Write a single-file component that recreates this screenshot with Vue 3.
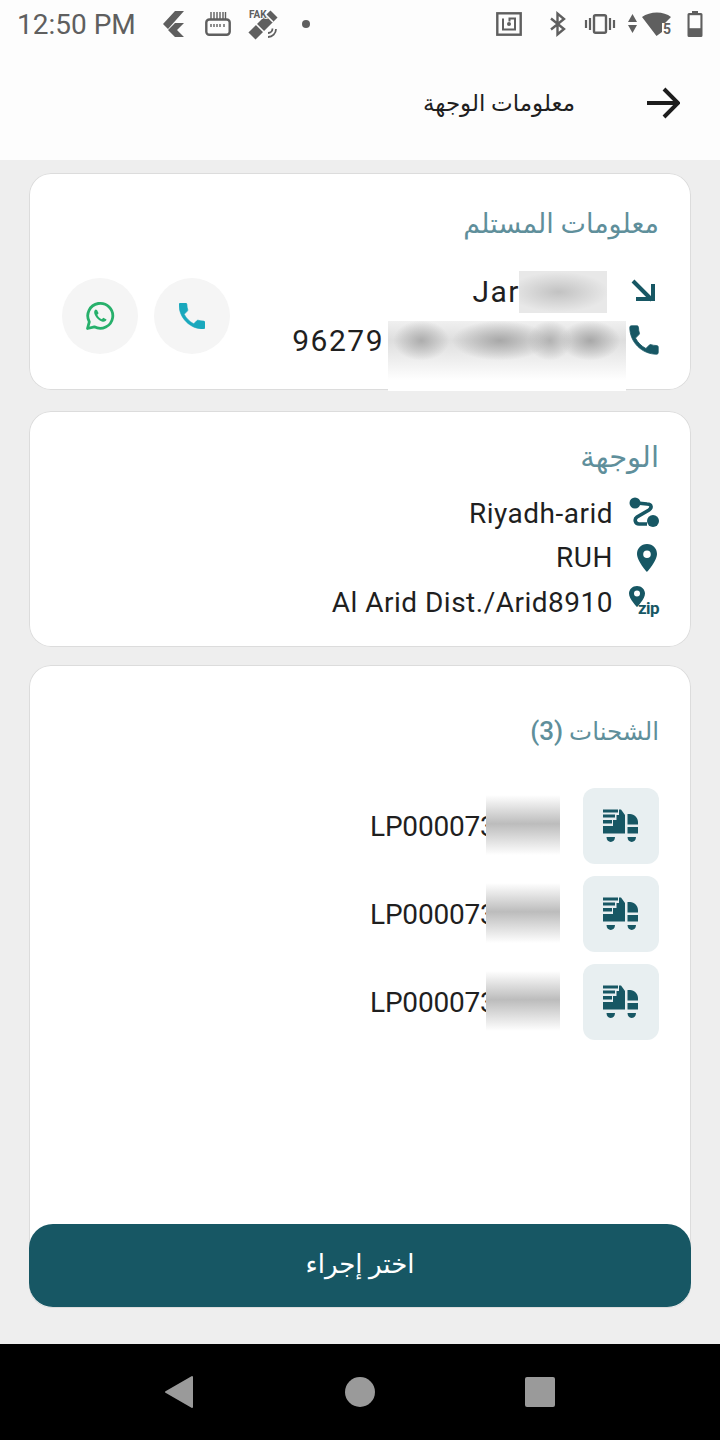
<template>
  <div class="page">
    <header class="top">
      <div class="status" dir="ltr">
        <span class="time">12:50 PM</span>
        <div class="status-left">
          <svg width="22" height="28" viewBox="0 0 22 28"><path d="M0 14L12 1H21L5 19ZM12 13H21L14 20L21 27H12L5 20Z" fill="#5f5f5f"/></svg>
          <svg class="sim" width="26" height="24" viewBox="0 0 26 24"><rect x="1.300" y="7.500" width="23.400" height="15.200" rx="3" fill="none" stroke="#5f5f5f" stroke-width="2.400"/><path d="M6 0v7M9 0v7M12 0v7M15 0v7M18 0v7M20.500 0v7M6 12v3M9 12v3M12 12v3M15 12v3M19 12v3" stroke="#5f5f5f" stroke-width="1.400"/></svg>
          <svg class="sat" width="30" height="30" viewBox="0 0 30 30"><path d="M26 5L4 27" stroke="#5f5f5f" stroke-width="10"/><path d="M7 14L16 23M17 5L25 13" stroke="#fdfdfd" stroke-width="1.600"/><path d="M20 24c2.500 0 4.500-2 4.500-4.500M20 28c4.500 0 8-3.500 8-8" fill="none" stroke="#5f5f5f" stroke-width="1.800"/><text x="1" y="8.500" class="fake">FAK</text></svg>
          <i class="dot"></i>
        </div>
        <div class="status-right">
          <svg width="26" height="24" viewBox="0 0 26 24"><rect x="1.300" y="1.300" width="23.400" height="21.400" fill="none" stroke="#5f5f5f" stroke-width="2.400"/><path d="M7 6.500v11h12v-11h-5.500v3" fill="none" stroke="#5f5f5f" stroke-width="2"/><circle cx="13" cy="12" r="2" fill="#5f5f5f"/></svg>
          <svg class="bt" width="19" height="24" viewBox="0 0 19 24"><path d="M3 6.500L16 17L9.500 22.500V1.500L16 7L3 17.500" fill="none" stroke="#5f5f5f" stroke-width="2.400"/></svg>
          <svg class="vib" width="30" height="20" viewBox="0 0 30 20"><rect x="9" y="1.200" width="12" height="17.600" rx="1.500" fill="none" stroke="#5f5f5f" stroke-width="2.400"/><path d="M5 4v12M1 6v8M25 4v12M29 6v8" stroke="#5f5f5f" stroke-width="2.200"/></svg>
          <svg class="wifi" width="44" height="24" viewBox="0 0 44 24"><path d="M4.500 2L9 10H0ZM0 13H9L4.500 21Z" fill="#5f5f5f"/><path d="M14 5C22 -1 36 -1 43 5L37 11H34V20L28.500 24Z" fill="#5f5f5f"/><text x="35" y="22" class="five">5</text></svg>
          <svg class="batt" width="16" height="26" viewBox="0 0 16 26"><path d="M5 0h6v2h3a1.500 1.500 0 0 1 1.500 1.500v21a1.500 1.500 0 0 1-1.500 1.500H2a1.500 1.500 0 0 1-1.500-1.500v-21A1.500 1.500 0 0 1 2 2h3z" fill="#5f5f5f"/><rect x="2.600" y="4.200" width="10.800" height="13" fill="#fdfdfd"/></svg>
        </div>
      </div>
      <div class="appbar">
        <svg width="34" height="32" viewBox="0 0 34 32"><path d="M1 16H32M18 2L32 16L18 30" fill="none" stroke="#1d1d1d" stroke-width="4"/></svg>
        <h1>معلومات الوجهة</h1>
      </div>
    </header>

    <main class="content">
      <section class="card receiver">
        <div class="info">
          <h2>معلومات المستلم</h2>
          <div class="line">
            <svg class="ico" width="30" height="30" viewBox="0 0 30 30"><path d="M4 5L23 24M24 8V23H7" fill="none" stroke="#175764" stroke-width="4"/></svg>
            <span class="masked" dir="ltr">Jar<i class="redact name"></i><b class="spacer name-w"></b></span>
          </div>
          <div class="line">
            <svg class="ico" width="30" height="30" viewBox="2.500 2.500 19 19"><path :d="phonePath" fill="#175764" stroke="#175764" stroke-width=".5" stroke-linejoin="round"/></svg>
            <span class="masked" dir="ltr">96279<i class="redact phone"></i><b class="spacer phone-w"></b></span>
          </div>
        </div>
        <div class="actions">
          <button class="round">
            <svg width="26" height="26" viewBox="3 3 18 18"><path :d="phonePath" fill="#19a8bd" stroke="#19a8bd" stroke-width=".4" stroke-linejoin="round"/></svg>
          </button>
          <button class="round">
            <svg width="30" height="30" viewBox="0 0 30 30"><path d="M2.500 27.500L4.300 20.800A12.500 12.500 0 1 1 9.300 25.800Z" fill="none" stroke="#27b06b" stroke-width="2.800" stroke-linejoin="round"/><path d="M10.500 8.500c-1.500 1-1.800 3-.6 5.500 1.500 3 4 5.500 7 6.500 2.500.7 4.200-.3 4.600-2l-3.200-1.800-1.500 1.500c-2-.8-3.600-2.500-4.500-4.500l1.300-1.400-1.600-3.300z" fill="#27b06b"/></svg>
          </button>
        </div>
      </section>

      <section class="card destination">
        <h2>الوجهة</h2>
        <div class="line">
          <svg class="ico" width="30" height="32" viewBox="0 0 30 32"><circle cx="6" cy="6" r="5.500" fill="#175764"/><circle cx="24" cy="24" r="6" fill="#175764"/><path d="M8 6L18 7C23 7 23 11 20 13L8 20C5 22 6 27 10 27L18 27" fill="none" stroke="#175764" stroke-width="3.600"/></svg>
          <span dir="ltr">Riyadh-arid</span>
        </div>
        <div class="line">
          <svg class="ico" width="30" height="30" viewBox="0 0 30 30"><path fill-rule="evenodd" d="M18 1C12 1 8 5.500 8 11c0 7 10 18 10 18s10-11 10-18C28 5.500 24 1 18 1zm0 6.500a3.800 3.800 0 1 1 0 7.600 3.800 3.800 0 0 1 0-7.600z" fill="#175764"/></svg>
          <span dir="ltr">RUH</span>
        </div>
        <div class="line">
          <svg class="ico" width="30" height="34" viewBox="0 0 30 34"><path fill-rule="evenodd" d="M8 1C3.500 1 0 4.500 0 8.500 0 14 8 22 8 22S16 14 16 8.500C16 4.500 12.500 1 8 1zm0 4.500a3 3 0 1 1 0 6 3 3 0 0 1 0-6z" fill="#175764"/><text x="9" y="29" class="zip">zip</text></svg>
          <span dir="ltr">Al Arid Dist./Arid8910</span>
        </div>
      </section>

      <section class="card shipments">
        <h2 class="ship-title">الشحنات <b>(3)</b></h2>
        <ul class="ship-list">
          <li v-for="n in 3" :key="n" class="ship">
            <div class="tile">
              <svg width="76" height="76" viewBox="0 0 76 76">
                <path d="M20 21.500h15v3H20zM20 26.500h12v3H20zM20 32h9v3.500H20z" fill="#175764"/>
                <path d="M36 21.500h2l4 5.500v18.500H20V38h10v-6h3.500v-5H36z" fill="#175764"/>
                <path d="M44.500 26H47c4.500 0 8 4 8 8v2.500H44.500zM44.500 39H55v6.500H44.500z" fill="#175764"/>
                <path d="M23.500 49H32c0 6.500-8.500 6.500-8.500 0zM44.500 49H53c0 6.500-8.500 6.500-8.500 0z" fill="#175764"/>
              </svg>
            </div>
            <span class="masked code" dir="ltr">LP000073<i class="redact code-blur"></i></span>
          </li>
        </ul>
        <button class="action">اختر إجراء</button>
      </section>
    </main>

    <nav class="nav">
      <svg class="back" width="30" height="34" viewBox="0 0 30 34"><path d="M28 2V32L2 17Z" fill="#9a9a9a" stroke="#9a9a9a" stroke-width="2" stroke-linejoin="round"/></svg>
      <i class="home"></i>
      <i class="recent"></i>
    </nav>
  </div>
</template>

<script setup>
const phonePath = 'M6.620 10.790c1.440 2.830 3.760 5.140 6.590 6.590l2.200-2.200c.27-.27.67-.36 1.020-.24 1.120.37 2.330.57 3.570.57.55 0 1 .45 1 1V20c0 .55-.45 1-1 1-9.390 0-17-7.610-17-17 0-.55.45-1 1-1h3.500c.55 0 1 .45 1 1 0 1.250.2 2.450.57 3.570.11.35.03.74-.25 1.020l-2.200 2.200z'
</script>

<style>
body {
  margin: 0;
}
</style>

<style scoped>
.page {
  width: 720px;
  height: 1440px;
  display: flex;
  flex-direction: column;
  background: #eeeeee;
  font-family: Roboto, "DejaVu Sans", sans-serif;
  color: #1f1f1f;
}

.top {
  height: 160px;
  background: #fdfdfd;
}

.status {
  height: 48px;
  display: flex;
  align-items: center;
  padding: 0 17px;
  color: #5f5f5f;
}

.status svg {
  overflow: visible;
}

.time {
  font-size: 28px;
}

.status-left {
  display: flex;
  align-items: center;
  margin-left: 27px;
}

.sim {
  margin-left: 20px;
}

.sat {
  margin-left: 17px;
}

.dot {
  width: 8px;
  height: 8px;
  margin-left: 24px;
  border-radius: 50%;
  background: #5f5f5f;
}

.status-right {
  display: flex;
  align-items: center;
  margin-left: auto;
}

.bt {
  margin-left: 26px;
}

.vib {
  margin-left: 18px;
}

.wifi {
  margin-left: 13px;
}

.batt {
  margin-left: 15px;
}

.fake {
  font: bold 10px Roboto, sans-serif;
  fill: #5f5f5f;
  stroke: #fdfdfd;
  stroke-width: 1.5px;
  paint-order: stroke;
}

.five {
  font: bold 14px Roboto, sans-serif;
  fill: #5f5f5f;
}

.zip {
  font: bold 17px Roboto, sans-serif;
  letter-spacing: -0.6px;
  fill: #175764;
}

.appbar {
  height: 110px;
  display: flex;
  flex-direction: row-reverse;
  align-items: center;
  gap: 71px;
  padding-right: 40px;
}

.appbar h1 {
  margin: 0;
  font-size: 23px;
  font-weight: 400;
  direction: rtl;
}

.content {
  flex: 1;
  display: flex;
  flex-direction: column;
  gap: 21px;
  padding: 13px 29px 36px;
  min-height: 0;
}

.card {
  box-sizing: border-box;
  background: #ffffff;
  border-radius: 22px;
  box-shadow: inset 0 0 0 1px #dcdcdc;
}

.card h2 {
  margin: 0;
  font-size: 29px;
  font-weight: 400;
  color: #5f8f9b;
  direction: rtl;
}

.line {
  display: flex;
  flex-direction: row-reverse;
  align-items: center;
  gap: 16px;
  font-size: 28px;
  letter-spacing: 0.5px;
}

.ico {
  width: 30px;
  flex: none;
  overflow: visible;
}

.masked {
  position: relative;
  white-space: nowrap;
}

.spacer {
  display: inline-block;
}

.name-w {
  width: 92px;
}

.phone-w {
  width: 228px;
}

.redact {
  position: absolute;
  display: block;
}

.name {
  left: 47px;
  top: -3px;
  width: 88px;
  height: 42px;
  background: radial-gradient(ellipse 50px 20px at 45% 50%, #c2c2c2, #e8e8e8);
}

.phone {
  left: 96px;
  top: -2px;
  width: 238px;
  height: 70px;
  background:
    radial-gradient(ellipse 28px 20px at 14% 28%, #adadad, transparent),
    radial-gradient(ellipse 48px 20px at 47% 28%, #a8a8a8, transparent),
    radial-gradient(ellipse 22px 20px at 68% 28%, #b2b2b2, transparent),
    radial-gradient(ellipse 30px 20px at 85% 28%, #a8a8a8, transparent),
    linear-gradient(#f0f0f0, #dedede 28%, #ffffff 85%);
}

.receiver {
  height: 217px;
  display: flex;
  justify-content: space-between;
  flex-direction: row-reverse;
  padding: 0 32px 0 33px;
}

.info {
  display: flex;
  flex-direction: column;
  align-items: flex-end;
  padding-top: 35px;
}

.receiver h2 {
  font-size: 27px;
  margin-bottom: 24px;
}

.receiver .line {
  height: 44px;
  margin-top: 5px;
  gap: 17px;
  font-size: 30px;
  letter-spacing: 1.500px;
}

.actions {
  display: flex;
  flex-direction: row-reverse;
  gap: 16px;
  padding-top: 105px;
}

.round {
  width: 76px;
  height: 76px;
  border: 0;
  padding: 0;
  border-radius: 50%;
  background: #f5f5f5;
  display: flex;
  align-items: center;
  justify-content: center;
}

.destination {
  height: 236px;
  padding: 29px 32px 0;
  display: flex;
  flex-direction: column;
  align-items: flex-end;
}

.destination .line {
  height: 44.500px;
}

.destination h2 {
  margin-bottom: 17px;
}

.shipments {
  flex: 1;
  display: flex;
  flex-direction: column;
  margin-top: -3px;
}

.card .ship-title {
  padding: 51px 32px 0 0;
  font-size: 24.500px;
  text-align: right;
}

.ship-title b {
  font-size: 26px;
  font-weight: 500;
}

.ship-list {
  list-style: none;
  margin: 0;
  padding: 42px 32px 0 0;
  display: flex;
  flex-direction: column;
  gap: 12px;
}

.ship {
  display: flex;
  flex-direction: row-reverse;
  align-items: center;
  gap: 23px;
}

.tile {
  width: 76px;
  height: 76px;
  border-radius: 12px;
  background: #e8eff1;
}

.code {
  display: block;
  width: 190px;
  font-size: 28px;
  font-weight: 400;
  letter-spacing: -0.2px;
}

.code-blur {
  left: 116px;
  top: -15px;
  width: 74px;
  height: 60px;
  background: linear-gradient(#ffffff, #bcbcbc 48%, #ffffff);
}

.action {
  margin-top: auto;
  margin-bottom: 1px;
  height: 83px;
  border: 0;
  padding: 0 0 4px;
  border-radius: 24px;
  background: #175764;
  color: #ffffff;
  font-family: inherit;
  font-size: 26px;
  direction: rtl;
}

.nav {
  height: 96px;
  flex: none;
  background: #000000;
  display: flex;
  align-items: center;
  justify-content: center;
  gap: 150px;
  padding-right: 2px;
}

.back {
  margin-right: 1px;
}

.home {
  width: 30px;
  height: 30px;
  border-radius: 50%;
  background: #9a9a9a;
}

.recent {
  width: 30px;
  height: 30px;
  border-radius: 2px;
  background: #9a9a9a;
}
</style>
